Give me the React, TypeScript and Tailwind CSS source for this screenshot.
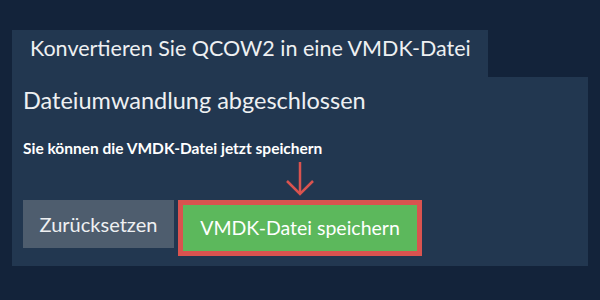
export default function App() {
  return (
    <div className="h-[300px] w-[600px] bg-[#13233a] pl-[12px] pt-[30px] font-['Lato',sans-serif] text-[#eef0f2]">
      <div className="inline-flex h-[47px] bg-[#223750] pl-[18px] pr-[17px] pt-[6px] text-[21.5px] leading-[25px]">
        Konvertieren Sie QCOW2 in eine VMDK-Datei
      </div>
      <div className="flex h-[189px] w-[576px] flex-col bg-[#223750] pl-[11px] pt-[9px]">
        <h2 className="text-[23.5px] leading-[29px]">Dateiumwandlung abgeschlossen</h2>
        <p className="mt-[24px] text-[15.5px] font-bold leading-[18px] text-white">
          Sie können die VMDK-Datei jetzt speichern
        </p>
        <div className="mt-[43px] flex items-start gap-[4px]">
          <button
            type="button"
            className="flex h-[48px] w-[151px] items-center justify-center bg-[#4e5d6e] text-[20px] leading-[24px] text-[#eef0f2]"
          >
            Zurücksetzen
          </button>
          <div className="relative">
            <svg
              className="absolute left-1/2 top-[-39px] -translate-x-1/2"
              width="30"
              height="36"
              viewBox="0 0 30 36"
              fill="none"
              stroke="#d9534f"
              strokeWidth="2.5"
            >
              <path d="M15 1V33" />
              <path d="M2 20L15 33L28 20" />
            </svg>
            <button
              type="button"
              className="flex h-[56px] w-[244px] items-center justify-center border-[5px] border-[#d9534f] bg-[#5cb85c] text-[19.5px] leading-[24px] text-white"
            >
              VMDK-Datei speichern
            </button>
          </div>
        </div>
      </div>
    </div>
  );
}
